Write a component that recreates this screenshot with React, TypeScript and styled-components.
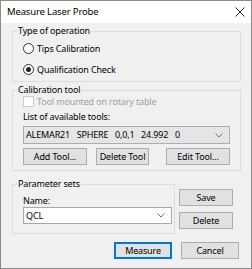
import React from "react";
import styled, { createGlobalStyle } from "styled-components";

const Global = createGlobalStyle`
  html, body {
    margin: 0;
    padding: 0;
    background: #ffffff;
  }
  body {
    font-family: "Noto Sans", "Liberation Sans", sans-serif;
    font-size: 9px;
    line-height: 12px;
    letter-spacing: -0.15px;
    color: #000;
  }
`;

const Dialog = styled.div`
  width: 252px;
  height: 269px;
  box-sizing: border-box;
  border: 1px solid #8c8c8c;
  background: #f0f0f0;
  display: flex;
  flex-direction: column;
`;

const TitleBar = styled.div`
  height: 22px;
  background: #ffffff;
  display: flex;
  align-items: center;
  justify-content: space-between;
  padding: 0 6px;
  font-size: 9.5px;
`;

const Body = styled.div`
  display: flex;
  flex-direction: column;
  padding: 2px 10px 0 11px;
`;

const Group = styled.fieldset<{ $mt?: number; $w?: number }>`
  margin: ${(p) => p.$mt ?? 0}px 0 0;
  padding: 0 4px;
  border: 1px solid #dcdcdc;
  min-width: 0;
  ${(p) => (p.$w ? `width: ${p.$w}px; box-sizing: border-box;` : "")}
`;

const Legend = styled.legend`
  padding: 0 1px;
  line-height: 12px;
`;

const Inner = styled.div<{ $pt?: number; $pb?: number }>`
  display: flex;
  flex-direction: column;
  padding: ${(p) => p.$pt ?? 0}px 0 ${(p) => p.$pb ?? 0}px 6px;
`;

const OptionRow = styled.label<{ $h?: number; $disabled?: boolean }>`
  display: flex;
  align-items: center;
  gap: 3px;
  height: ${(p) => p.$h ?? 21}px;
  white-space: nowrap;
  color: ${(p) => (p.$disabled ? "#a0a0a0" : "#000")};
`;

const Radio = styled.span<{ $checked?: boolean }>`
  flex: none;
  width: 11px;
  height: 11px;
  box-sizing: border-box;
  border: 1px solid #333;
  border-radius: 50%;
  background: #fff;
  display: flex;
  align-items: center;
  justify-content: center;
  &::after {
    content: "";
    width: 5px;
    height: 5px;
    border-radius: 50%;
    background: ${(p) => (p.$checked ? "#222" : "transparent")};
  }
`;

const Check = styled.span`
  flex: none;
  width: 11px;
  height: 11px;
  box-sizing: border-box;
  border: 1px solid #cccccc;
  background: #fff;
`;

const Caption = styled.div<{ $mt?: number }>`
  line-height: 12px;
  margin-top: ${(p) => p.$mt ?? 0}px;
`;

const Combo = styled.div<{ $editable?: boolean; $mt?: number; $w?: number }>`
  box-sizing: border-box;
  height: ${(p) => (p.$editable ? 17 : 18)}px;
  width: ${(p) => (p.$w ? `${p.$w}px` : "auto")};
  margin: ${(p) => p.$mt ?? 0}px ${(p) => (p.$w ? 0 : 6)}px 0 0;
  border: 1px solid ${(p) => (p.$editable ? "#a8a8a8" : "#adadad")};
  background: ${(p) => (p.$editable ? "#ffffff" : "#e5e5e5")};
  display: flex;
  align-items: center;
  justify-content: space-between;
  padding: 0 6px 0 2px;
  white-space: pre;
`;

const Button = styled.button<{ $w: number; $default?: boolean }>`
  box-sizing: border-box;
  width: ${(p) => p.$w}px;
  height: 17px;
  padding: 0;
  font: inherit;
  line-height: 12px;
  letter-spacing: inherit;
  white-space: nowrap;
  color: #000;
  background: #e1e1e1;
  border: 1px solid ${(p) => (p.$default ? "#0078d7" : "#adadad")};
  box-shadow: ${(p) => (p.$default ? "inset 0 0 0 1px #0078d7" : "none")};
`;

const ToolButtons = styled.div`
  display: flex;
  margin-top: 4px;
  padding-right: 6px;
  justify-content: space-between;
  & > :nth-child(2) {
    margin-right: 8px;
  }
`;

const ParamRow = styled.div`
  display: flex;
  margin-top: 7px;
`;

const SideButtons = styled.div`
  display: flex;
  flex-direction: column;
  gap: 6px;
  padding-top: 11px;
  margin-left: 4px;
`;

const Footer = styled.div`
  display: flex;
  justify-content: flex-end;
  gap: 9px;
  margin: 8px 2px 0 0;
`;

function Chevron() {
  return (
    <svg width="8" height="5" viewBox="0 0 8 5">
      <polyline points="0.5,0.5 4,4 7.5,0.5" fill="none" stroke="#707070" strokeWidth="1" />
    </svg>
  );
}

function CloseIcon() {
  return (
    <svg width="10" height="10" viewBox="0 0 10 10">
      <path d="M0.5 0.5 L9.5 9.5 M9.5 0.5 L0.5 9.5" stroke="#222" strokeWidth="1" />
    </svg>
  );
}

export default function App() {
  return (
    <>
      <Global />
      <Dialog>
        <TitleBar>
          <span>Measure Laser Probe</span>
          <CloseIcon />
        </TitleBar>
        <Body>
          <Group>
            <Legend>Type of operation</Legend>
            <Inner $pt={1} $pb={1}>
              <OptionRow>
                <Radio />
                Tips Calibration
              </OptionRow>
              <OptionRow>
                <Radio $checked />
                Qualification Check
              </OptionRow>
            </Inner>
          </Group>

          <Group $mt={2}>
            <Legend>Calibration tool</Legend>
            <Inner $pb={5}>
              <OptionRow $h={11} $disabled>
                <Check />
                Tool mounted on rotary table
              </OptionRow>
              <Caption $mt={4}>List of available tools:</Caption>
              <Combo $mt={3}>
                <span>ALEMAR21   SPHERE   0,0,1   24.992   0</span>
                <Chevron />
              </Combo>
              <ToolButtons>
                <Button $w={64}>Add Tool...</Button>
                <Button $w={53}>Delete Tool</Button>
                <Button $w={64}>Edit Tool...</Button>
              </ToolButtons>
            </Inner>
          </Group>

          <ParamRow>
            <Group $w={163}>
              <Legend>Parameter sets</Legend>
              <Inner $pb={9}>
                <Caption $mt={5}>Name:</Caption>
                <Combo $editable $w={149}>
                  <span>QCL</span>
                  <Chevron />
                </Combo>
              </Inner>
            </Group>
            <SideButtons>
              <Button $w={54}>Save</Button>
              <Button $w={54}>Delete</Button>
            </SideButtons>
          </ParamRow>

          <Footer>
            <Button $w={58} $default>
              Measure
            </Button>
            <Button $w={58}>Cancel</Button>
          </Footer>
        </Body>
      </Dialog>
    </>
  );
}
